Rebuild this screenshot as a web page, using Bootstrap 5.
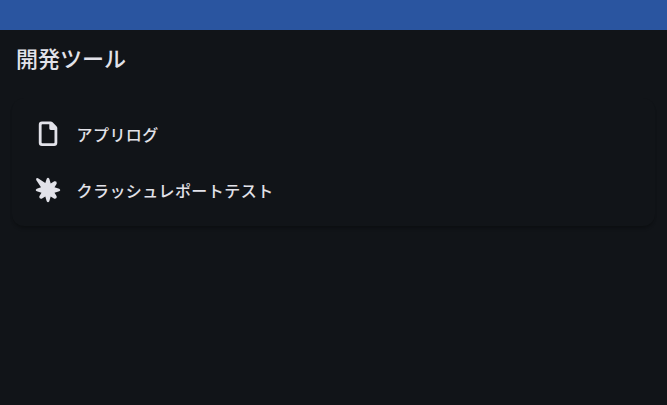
<!DOCTYPE html>
<html lang="ja" data-bs-theme="dark">
<head>
<meta charset="utf-8">
<meta name="viewport" content="width=device-width, initial-scale=1">
<title>開発ツール</title>
<link href="https://cdn.jsdelivr.net/npm/bootstrap@5.3.0/dist/css/bootstrap.min.css" rel="stylesheet">
<style>
body { background: #111418; color: #e2e2e9; font-family: "Noto Sans CJK JP", sans-serif; font-weight: 500; }
.status-strip { height: 30px; background: #2a55a0; }
.page-title { height: 60px; font-size: 22px; line-height: 55px; font-weight: 500; color: #e2e2e9; }
.tool-card { margin: 8px 12px; padding: 8px 0; border-radius: 12px; background: #111418; box-shadow: 0 4px 4px -2px rgba(0,0,0,.2), 0 2px 2px rgba(0,0,0,.1); }
.tool-card .list-group-item { height: 56px; padding: 0 20px; gap: 12.5px; color: inherit; font-size: 16px; letter-spacing: .45px; line-height: 24px; }
.tool-icon { width: 32px; height: 32px; fill: #e2e2e9; }
</style>
</head>
<body class="overflow-hidden">
<div class="status-strip"></div>
<header><h1 class="page-title px-3 m-0">開発ツール</h1></header>
<main>
  <div class="card border-0 tool-card">
    <ul class="list-group list-group-flush">
      <li class="list-group-item d-flex align-items-center bg-transparent border-0">
        <svg class="tool-icon flex-shrink-0" viewBox="0 0 32 32" aria-hidden="true"><path fill-rule="evenodd" d="M10 3.500h8.700q1.100 0 1.900.8l3.900 3.900q.8.800.8 1.900v14.700q0 3.200-3.200 3.200H10q-3.200 0-3.200-3.200V6.700q0-3.200 3.200-3.200zm.4 2.700q-.8 0-.8.8v17.500q0 .8.800.8h11.300q.8 0 .8-.8V12h-3.800q-1.400 0-1.400-1.400V6.200z"/></svg>
        <span>アプリログ</span>
      </li>
      <li class="list-group-item d-flex align-items-center bg-transparent border-0">
        <svg class="tool-icon flex-shrink-0" viewBox="0 0 32 32" aria-hidden="true"><path d="M13.300 9L14.700 4.800Q16 2.700 17.300 4.800L18.700 9.500L22.300 7.300Q25.200 6.800 24.700 9.700L22.500 13.300L27.200 14.700Q29.300 16 27.200 17.300L22.500 18.700L24.700 22.300Q25.200 25.200 22.300 24.700L18.700 22.500L17.300 27.200Q16 29.300 14.700 27.200L13.300 22.500L9.700 24.700Q6.800 25.200 7.300 22.300L9.500 18.700L4.800 17.300Q2.700 16 4.800 14.700L9 13.300L4.200 6Q3.600 3.600 6 4.200Z"/></svg>
        <span>クラッシュレポートテスト</span>
      </li>
    </ul>
  </div>
</main>
<script src="https://cdn.jsdelivr.net/npm/bootstrap@5.3.0/dist/js/bootstrap.bundle.min.js"></script>
</body>
</html>
